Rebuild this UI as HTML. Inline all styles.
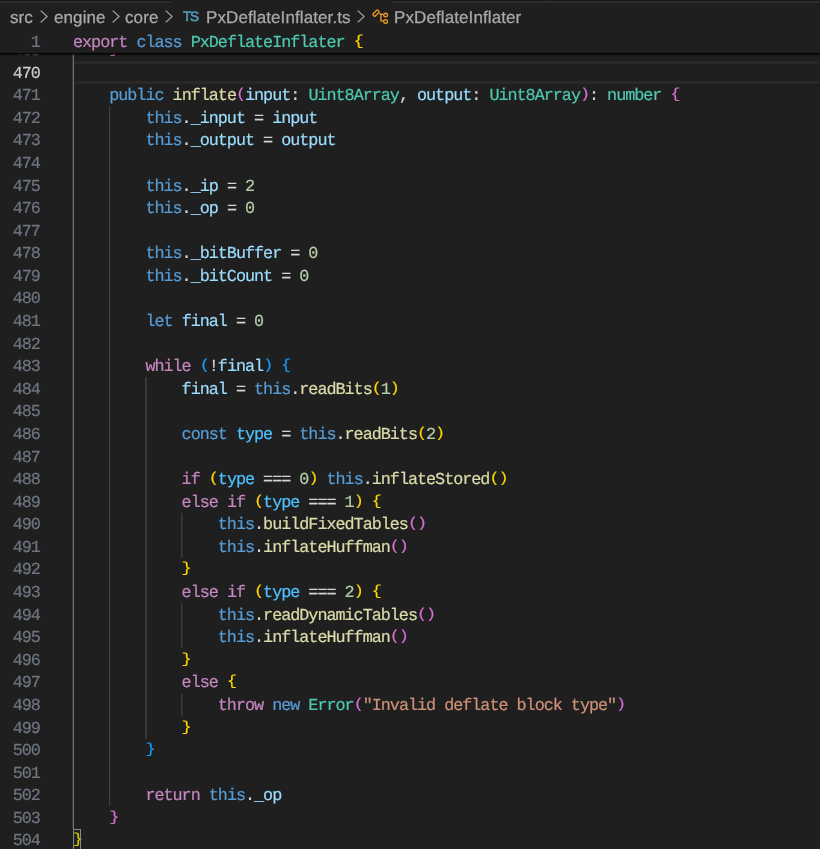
<!DOCTYPE html>
<html><head><meta charset="utf-8">
<style>
html,body{margin:0;padding:0;}
body{width:820px;height:849px;overflow:hidden;background:#1f1f1f;position:relative;}
.mono{font-family:"Liberation Mono",monospace;}
.ln{position:absolute;will-change:transform;left:0;width:39.8px;text-align:right;height:22.58px;line-height:22.58px;color:#6e7681;font-family:"Liberation Mono",monospace;font-size:16.8px;letter-spacing:-1.02px;white-space:pre;margin-top:2.4px;-webkit-text-stroke:0.2px currentColor;text-rendering:geometricPrecision;}
.ln.act{color:#cccccc;}
.cl{position:absolute;will-change:transform;left:72.95px;height:22.58px;line-height:22.58px;color:#cccccc;font-family:"Liberation Mono",monospace;font-size:16.8px;letter-spacing:-1.02px;white-space:pre;margin-top:2.4px;-webkit-text-stroke:0.2px currentColor;text-rendering:geometricPrecision;}
.k{color:#c586c0} .s{color:#569cd6} .t{color:#4ec9b0} .f{color:#dcdcaa} .v{color:#9cdcfe} .c{color:#4fc1ff}
.n{color:#b5cea8} .str{color:#ce9178} .o{color:#d4d4d4}
.b1{color:#ffd700} .b2{color:#da70d6} .b3{color:#179fff}
.b1,.b2,.b3{display:inline-block;transform-origin:0 15.76px;transform:translateY(-2.3px) scaleY(0.86);}
.g{position:absolute;width:1px;}
.ga{background:#707070;}
.hl{position:absolute;left:72.75px;right:0;height:2.5px;background:#282828;}
#tabs{position:absolute;left:0;top:0;width:820px;height:2.5px;}
.tabbg{position:absolute;top:0;height:1.4px;background:#181818;}
.tabbd{position:absolute;top:1.4px;height:1.6px;background:#2b2b2b;}
#bc{position:absolute;left:0;top:2.5px;width:820px;height:27.5px;font-family:"Liberation Sans",sans-serif;font-size:17px;letter-spacing:0.1px;color:#a9a9a9;text-rendering:geometricPrecision;-webkit-text-stroke:0.25px #a9a9a9;}
.bt{position:absolute;will-change:transform;top:1.1px;line-height:27.5px;white-space:pre;}
.chev{position:absolute;top:7.4px;}
.ts{position:absolute;will-change:transform;left:183px;top:0.3px;line-height:27.5px;font-size:13.6px;color:#519aba;letter-spacing:-1.3px;-webkit-text-stroke:0.6px #519aba;text-rendering:geometricPrecision;}
.cls{position:absolute;left:366px;top:1.5px;}
#sticky{position:absolute;left:0;top:30px;width:820px;height:22.58px;background:#1f1f1f;}
</style></head><body>
<div class="hl" style="top:61.30px"></div>
<div class="hl" style="top:81.38px"></div>
<div class="g" style="left:72px;top:38.72px;height:790.30px;background:rgb(55,55,55)"></div>
<div class="g" style="left:73px;top:38.72px;height:790.30px;background:rgb(112,112,112)"></div>
<div class="g" style="left:109px;top:106.46px;height:699.98px;background:rgb(64,64,64)"></div>
<div class="g" style="left:110px;top:106.46px;height:699.98px;background:rgb(35,35,35)"></div>
<div class="g" style="left:145px;top:377.42px;height:361.28px;background:rgb(56,56,56)"></div>
<div class="g" style="left:146px;top:377.42px;height:361.28px;background:rgb(56,56,56)"></div>
<div class="g" style="left:181px;top:512.90px;height:45.16px;background:rgb(61,61,61)"></div>
<div class="g" style="left:182px;top:512.90px;height:45.16px;background:rgb(43,43,43)"></div>
<div class="g" style="left:181px;top:603.22px;height:45.16px;background:rgb(61,61,61)"></div>
<div class="g" style="left:182px;top:603.22px;height:45.16px;background:rgb(43,43,43)"></div>
<div class="g" style="left:181px;top:693.54px;height:22.58px;background:rgb(61,61,61)"></div>
<div class="g" style="left:182px;top:693.54px;height:22.58px;background:rgb(43,43,43)"></div>
<div class="ln" style="top:38.72px">469</div>
<div class="cl" style="top:38.72px">    <span class="b2">}</span></div>
<div class="ln act" style="top:61.30px">470</div>
<div class="ln" style="top:83.88px">471</div>
<div class="cl" style="top:83.88px">    <span class="s">public</span> <span class="f">inflate</span><span class="b2">(</span><span class="v">input</span><span class="o">: </span><span class="t">Uint8Array</span><span class="o">, </span><span class="v">output</span><span class="o">: </span><span class="t">Uint8Array</span><span class="b2">)</span><span class="o">: </span><span class="t">number</span> <span class="b2">{</span></div>
<div class="ln" style="top:106.46px">472</div>
<div class="cl" style="top:106.46px">        <span class="s">this</span><span class="o">.</span><span class="v">_input</span><span class="o"> = </span><span class="v">input</span></div>
<div class="ln" style="top:129.04px">473</div>
<div class="cl" style="top:129.04px">        <span class="s">this</span><span class="o">.</span><span class="v">_output</span><span class="o"> = </span><span class="v">output</span></div>
<div class="ln" style="top:151.62px">474</div>
<div class="ln" style="top:174.20px">475</div>
<div class="cl" style="top:174.20px">        <span class="s">this</span><span class="o">.</span><span class="v">_ip</span><span class="o"> = </span><span class="n">2</span></div>
<div class="ln" style="top:196.78px">476</div>
<div class="cl" style="top:196.78px">        <span class="s">this</span><span class="o">.</span><span class="v">_op</span><span class="o"> = </span><span class="n">0</span></div>
<div class="ln" style="top:219.36px">477</div>
<div class="ln" style="top:241.94px">478</div>
<div class="cl" style="top:241.94px">        <span class="s">this</span><span class="o">.</span><span class="v">_bitBuffer</span><span class="o"> = </span><span class="n">0</span></div>
<div class="ln" style="top:264.52px">479</div>
<div class="cl" style="top:264.52px">        <span class="s">this</span><span class="o">.</span><span class="v">_bitCount</span><span class="o"> = </span><span class="n">0</span></div>
<div class="ln" style="top:287.10px">480</div>
<div class="ln" style="top:309.68px">481</div>
<div class="cl" style="top:309.68px">        <span class="s">let</span> <span class="v">final</span><span class="o"> = </span><span class="n">0</span></div>
<div class="ln" style="top:332.26px">482</div>
<div class="ln" style="top:354.84px">483</div>
<div class="cl" style="top:354.84px">        <span class="k">while</span> <span class="b3">(</span><span class="o">!</span><span class="v">final</span><span class="b3">)</span> <span class="b3">{</span></div>
<div class="ln" style="top:377.42px">484</div>
<div class="cl" style="top:377.42px">            <span class="v">final</span><span class="o"> = </span><span class="s">this</span><span class="o">.</span><span class="f">readBits</span><span class="b1">(</span><span class="n">1</span><span class="b1">)</span></div>
<div class="ln" style="top:400.00px">485</div>
<div class="ln" style="top:422.58px">486</div>
<div class="cl" style="top:422.58px">            <span class="s">const</span> <span class="c">type</span><span class="o"> = </span><span class="s">this</span><span class="o">.</span><span class="f">readBits</span><span class="b1">(</span><span class="n">2</span><span class="b1">)</span></div>
<div class="ln" style="top:445.16px">487</div>
<div class="ln" style="top:467.74px">488</div>
<div class="cl" style="top:467.74px">            <span class="k">if</span> <span class="b1">(</span><span class="c">type</span><span class="o"> === </span><span class="n">0</span><span class="b1">)</span> <span class="s">this</span><span class="o">.</span><span class="f">inflateStored</span><span class="b1">()</span></div>
<div class="ln" style="top:490.32px">489</div>
<div class="cl" style="top:490.32px">            <span class="k">else</span> <span class="k">if</span> <span class="b1">(</span><span class="c">type</span><span class="o"> === </span><span class="n">1</span><span class="b1">)</span> <span class="b1">{</span></div>
<div class="ln" style="top:512.90px">490</div>
<div class="cl" style="top:512.90px">                <span class="s">this</span><span class="o">.</span><span class="f">buildFixedTables</span><span class="b2">()</span></div>
<div class="ln" style="top:535.48px">491</div>
<div class="cl" style="top:535.48px">                <span class="s">this</span><span class="o">.</span><span class="f">inflateHuffman</span><span class="b2">()</span></div>
<div class="ln" style="top:558.06px">492</div>
<div class="cl" style="top:558.06px">            <span class="b1">}</span></div>
<div class="ln" style="top:580.64px">493</div>
<div class="cl" style="top:580.64px">            <span class="k">else</span> <span class="k">if</span> <span class="b1">(</span><span class="c">type</span><span class="o"> === </span><span class="n">2</span><span class="b1">)</span> <span class="b1">{</span></div>
<div class="ln" style="top:603.22px">494</div>
<div class="cl" style="top:603.22px">                <span class="s">this</span><span class="o">.</span><span class="f">readDynamicTables</span><span class="b2">()</span></div>
<div class="ln" style="top:625.80px">495</div>
<div class="cl" style="top:625.80px">                <span class="s">this</span><span class="o">.</span><span class="f">inflateHuffman</span><span class="b2">()</span></div>
<div class="ln" style="top:648.38px">496</div>
<div class="cl" style="top:648.38px">            <span class="b1">}</span></div>
<div class="ln" style="top:670.96px">497</div>
<div class="cl" style="top:670.96px">            <span class="k">else</span> <span class="b1">{</span></div>
<div class="ln" style="top:693.54px">498</div>
<div class="cl" style="top:693.54px">                <span class="k">throw</span> <span class="s">new</span> <span class="t">Error</span><span class="b2">(</span><span class="str">&quot;Invalid deflate block type&quot;</span><span class="b2">)</span></div>
<div class="ln" style="top:716.12px">499</div>
<div class="cl" style="top:716.12px">            <span class="b1">}</span></div>
<div class="ln" style="top:738.70px">500</div>
<div class="cl" style="top:738.70px">        <span class="b3">}</span></div>
<div class="ln" style="top:761.28px">501</div>
<div class="ln" style="top:783.86px">502</div>
<div class="cl" style="top:783.86px">        <span class="k">return</span> <span class="s">this</span><span class="o">.</span><span class="v">_op</span></div>
<div class="ln" style="top:806.44px">503</div>
<div class="cl" style="top:806.44px">    <span class="b2">}</span></div>
<div class="ln" style="top:829.02px">504</div>
<div class="cl" style="top:829.02px"><span class="b1">}</span></div>
<div style="position:absolute;left:72.75px;top:829.02px;width:8.5px;height:22.58px;box-sizing:border-box;border:1.25px solid #888;background:rgba(0,100,0,0.1);"></div>
<div style="position:absolute;left:0;top:52.6px;width:820px;height:3.6px;background:linear-gradient(#000 0%,rgba(0,0,0,0.85) 30%,rgba(0,0,0,0.35) 60%,rgba(0,0,0,0) 100%);"></div>
<div id="sticky">
<div class="ln" style="top:0.5px">1</div>
<div class="cl" style="top:0.5px"><span class="k">export</span> <span class="s">class</span> <span class="t">PxDeflateInflater</span> <span class="b1">{</span></div>
</div>
<div id="tabs">
<div class="tabbg" style="left:0;width:171px"></div><div class="tabbd" style="left:0;width:171px"></div>
<div class="tabbg" style="left:392px;width:428px"></div><div class="tabbd" style="left:392px;width:428px"></div>
<div style="position:absolute;left:544px;top:0;width:1px;height:1.5px;background:#2e2e2e"></div>
</div>
<div id="bc">
<span class="bt" style="left:10px">src</span>
<span class="bt" style="left:53.5px">engine</span>
<span class="bt" style="left:125px">core</span>
<span class="bt" style="left:206px">PxDeflateInflater.ts</span>
<span class="bt" style="left:394px">PxDeflateInflater</span>
<svg class="chev" style="left:39.5px" viewBox="0 0 8 13" width="8" height="13"><path d="M0.7 0.6 L7.2 6.5 L0.7 12.4" fill="none" stroke="#a9a9a9" stroke-width="1.2"/></svg>
<svg class="chev" style="left:111.5px" viewBox="0 0 8 13" width="8" height="13"><path d="M0.7 0.6 L7.2 6.5 L0.7 12.4" fill="none" stroke="#a9a9a9" stroke-width="1.2"/></svg>
<svg class="chev" style="left:165px" viewBox="0 0 8 13" width="8" height="13"><path d="M0.7 0.6 L7.2 6.5 L0.7 12.4" fill="none" stroke="#a9a9a9" stroke-width="1.2"/></svg>
<svg class="chev" style="left:356.8px" viewBox="0 0 8 13" width="8" height="13"><path d="M0.7 0.6 L7.2 6.5 L0.7 12.4" fill="none" stroke="#a9a9a9" stroke-width="1.2"/></svg>
<span class="ts">TS</span>
<svg class="cls" viewBox="366 4 28 24" width="28" height="24"><g fill="none" stroke="#ee9d28" stroke-width="1.3"><rect x="372.6" y="11.6" width="6.8" height="3.0" rx="0.9" transform="rotate(-45 376 13.1)"/><path d="M379.2 13.7 L383.7 14.6 M380.9 13.9 V20.9 H383.7"/><circle cx="385.6" cy="15.1" r="1.85"/><circle cx="385.6" cy="21.5" r="1.85"/></g></svg>
</div>
</body></html>
